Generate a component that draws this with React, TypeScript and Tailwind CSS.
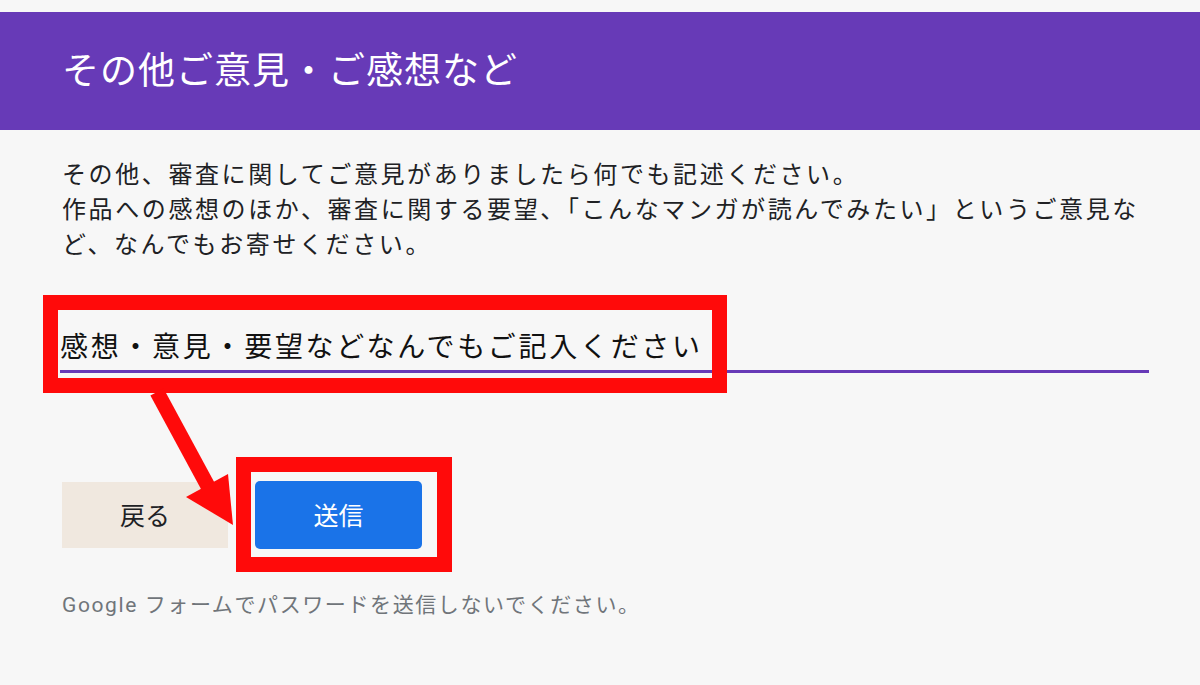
/* その他ご意見・ご感想など — Google フォーム最終ページ（注釈つきスクリーンショット） */

const JP = "font-['Noto_Sans_CJK_JP','Noto_Sans',sans-serif]";

function RedFrame({ className }: { className: string }) {
  return (
    <div
      className={`pointer-events-none absolute border-[15px] border-[#ff0a0a] ${className}`}
    />
  );
}

export default function App() {
  return (
    <div
      className={`relative h-[685px] w-[1200px] overflow-hidden bg-[#f7f7f7] ${JP}`}
    >
      {/* ヘッダー */}
      <div className="mt-[12px] h-[118px] bg-[#673ab7] pl-[62px] pt-[38px]">
        <h1 className="text-[37px] leading-[37px] tracking-[1px] text-white">
          その他ご意見・ご感想など
        </h1>
      </div>

      <div className="w-[1152px] pl-[62px]">
        {/* 説明文 */}
        <p className="mt-[25px] text-[24px] leading-[35px] tracking-[2.6px] text-[#202124]">
          その他、審査に関してご意見がありましたら何でも記述ください。
          <br />
          作品への感想のほか、審査に関する要望、「こんなマンガが読んでみたい」というご意見など、なんでもお寄せください。
        </p>

        {/* 入力欄 */}
        <div className="relative mt-[65px] -ml-[2px] w-[1089px]">
          <div className="border-b-[3px] border-[#673ab7] pb-[5px] text-[28px] leading-[40px] tracking-[2.7px] text-[#111]">
            感想・意見・要望などなんでもご記入ください
          </div>
          <RedFrame className="-left-[17px] -top-[30px] h-[98px] w-[684px]" />
        </div>

        {/* ボタン */}
        <div className="mt-[108px] flex items-center gap-[27px]">
          <button
            type="button"
            className="h-[66px] w-[166px] bg-[#f0e8df] text-[25px] text-[#202124]"
          >
            戻る
          </button>
          <div className="relative">
            <button
              type="button"
              className="h-[68px] w-[167px] rounded-[5px] bg-[#1a73e8] text-[25px] text-white"
            >
              送信
            </button>
            <RedFrame className="-left-[19px] -top-[24px] h-[115px] w-[216px]" />
          </div>
        </div>

        {/* 注意書き */}
        <p className="mt-[42px] font-['Roboto','Noto_Sans_CJK_JP',sans-serif] text-[21px] leading-[28px] tracking-[1.6px] text-[#70757a]">
          Google フォームでパスワードを送信しないでください。
        </p>
      </div>

      {/* 注釈の矢印 */}
      <svg
        className="pointer-events-none absolute left-0 top-0"
        width="1200"
        height="685"
        viewBox="0 0 1200 685"
      >
        <line
          x1="157"
          y1="392"
          x2="210"
          y2="490"
          stroke="#ff0a0a"
          strokeWidth="15"
        />
        <polygon points="186,497 228,474 233,525" fill="#ff0a0a" />
      </svg>
    </div>
  );
}
